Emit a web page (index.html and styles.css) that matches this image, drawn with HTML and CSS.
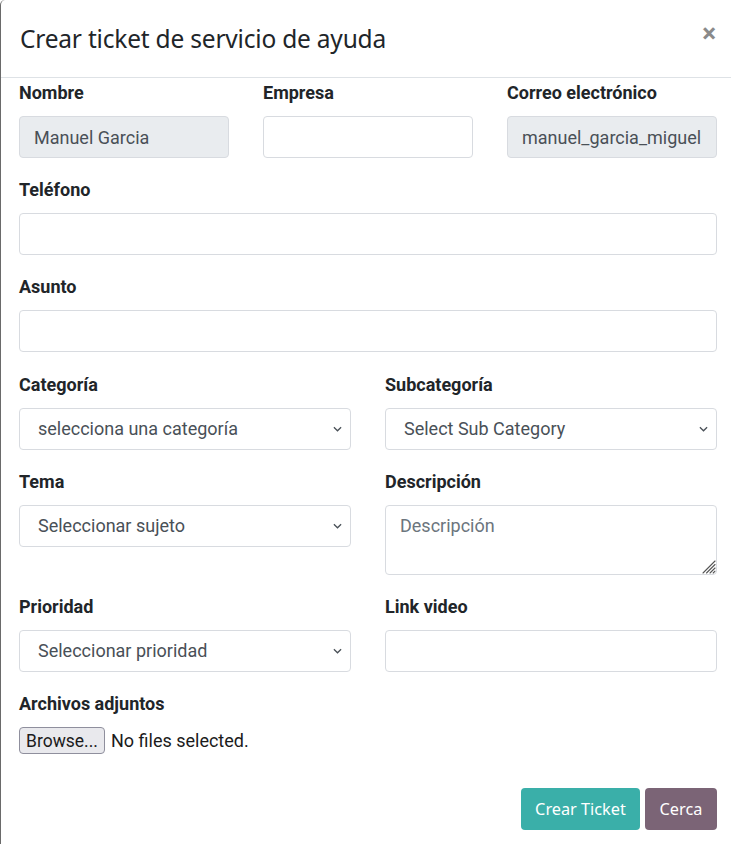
FILE: index.html
```html
<!DOCTYPE html>
<html lang="es">
<head>
<meta charset="utf-8">
<title>Crear ticket</title>
<link rel="stylesheet" href="styles.css">
</head>
<body>
<div class="modal">
  <header class="modal-header">
    <h4 class="modal-title">Crear ticket de servicio de ayuda</h4>
    <button class="close" type="button">×</button>
  </header>
  <div class="modal-body">
    <div class="row cols-3">
      <div class="group">
        <label class="lbl">Nombre</label>
        <input class="ctrl readonly" type="text" value="Manuel Garcia" readonly>
      </div>
      <div class="group">
        <label class="lbl">Empresa</label>
        <input class="ctrl" type="text">
      </div>
      <div class="group">
        <label class="lbl">Correo electrónico</label>
        <input class="ctrl readonly" type="text" value="manuel_garcia_miguel" readonly>
      </div>
    </div>
    <div class="group">
      <label class="lbl">Teléfono</label>
      <input class="ctrl" type="text">
    </div>
    <div class="group">
      <label class="lbl">Asunto</label>
      <input class="ctrl" type="text">
    </div>
    <div class="row cols-2">
      <div class="group">
        <label class="lbl">Categoría</label>
        <select class="ctrl sel"><option>selecciona una categoría</option></select>
      </div>
      <div class="group">
        <label class="lbl">Subcategoría</label>
        <select class="ctrl sel"><option>Select Sub Category</option></select>
      </div>
    </div>
    <div class="row cols-2">
      <div class="group">
        <label class="lbl">Tema</label>
        <select class="ctrl sel"><option>Seleccionar sujeto</option></select>
      </div>
      <div class="group">
        <label class="lbl">Descripción</label>
        <textarea class="ctrl area" placeholder="Descripción"></textarea>
      </div>
    </div>
    <div class="row cols-2">
      <div class="group">
        <label class="lbl">Prioridad</label>
        <select class="ctrl sel"><option>Seleccionar prioridad</option></select>
      </div>
      <div class="group">
        <label class="lbl">Link video</label>
        <input class="ctrl" type="text">
      </div>
    </div>
    <div class="group file-group">
      <label class="lbl">Archivos adjuntos</label>
      <div class="file">
        <span class="file-btn">Browse...</span>
        <span class="file-text">No files selected.</span>
      </div>
    </div>
  </div>
  <footer class="modal-footer">
    <button class="btn btn-primary" type="button">Crear Ticket</button>
    <button class="btn btn-secondary" type="button">Cerca</button>
  </footer>
</div>
</body>
</html>
```
FILE: styles.css
```css
html, body {
  margin: 0;
  padding: 0;
  background: #ffffff;
}
body {
  font-family: Roboto, "Liberation Sans", sans-serif;
  color: #212529;
  height: 844px;
  overflow: hidden;
}
.modal {
  border-left: 1px solid #6a6a6a;
  border-top-left-radius: 5px;
  min-height: 844px;
  background: #fff;
}
.modal-header {
  height: 78px;
  box-sizing: border-box;
  border-bottom: 1px solid #dee2e6;
  display: flex;
  align-items: center;
  justify-content: space-between;
  padding: 0 14px 0 19px;
}
.modal-title {
  margin: 0;
  font-family: "Noto Sans", sans-serif;
  font-weight: 400;
  font-size: 24.5px;
  color: #212529;
  letter-spacing: -0.2px;
}
.close {
  border: 0;
  background: none;
  padding: 0;
  font-family: Roboto, sans-serif;
  font-weight: 700;
  font-size: 26px;
  line-height: 1;
  color: #8a8a8a;
  margin-top: -12px;
  margin-right: 1px;
}
.modal-body {
  padding: 1px 14px 0 18px;
}
.row {
  display: grid;
  column-gap: 34px;
}
.cols-3 { grid-template-columns: 1fr 1fr 1fr; }
.cols-2 { grid-template-columns: 1fr 1fr; }
.group {
  display: flex;
  flex-direction: column;
  margin-bottom: 18.2px;
}
.lbl {
  font-weight: 700;
  font-size: 18px;
  line-height: 27px;
  margin-bottom: 10px;
  color: #212529;
}
.ctrl {
  box-sizing: border-box;
  height: 42px;
  width: 100%;
  border: 1px solid #d8dbe0;
  border-radius: 4px;
  background: #fff;
  font-family: Roboto, sans-serif;
  font-size: 18px;
  color: #495057;
  padding: 0 14px;
  margin: 0;
  outline: none;
}
.readonly {
  background: #e9ecef;
}
.sel {
  appearance: none;
  -webkit-appearance: none;
  padding-left: 18px;
  background-image: url("data:image/svg+xml,%3Csvg xmlns='http://www.w3.org/2000/svg' width='10' height='6' viewBox='0 0 10 6'%3E%3Cpath d='M1 1l4 4 4-4' fill='none' stroke='%23495057' stroke-width='1.4'/%3E%3C/svg%3E");
  background-repeat: no-repeat;
  background-position: right 8px center;
  background-size: 9px 6px;
}
.area {
  height: 70px;
  padding: 8px 14px;
  resize: vertical;
  line-height: 24px;
}
.area::placeholder {
  color: #6c757d;
}
.area::-webkit-resizer {
  background-color: transparent;
  background-image: url("data:image/svg+xml,%3Csvg xmlns='http://www.w3.org/2000/svg' width='15' height='15' viewBox='0 0 15 15'%3E%3Cg stroke='%23555' stroke-width='1.1' stroke-linecap='round'%3E%3Cpath d='M14 2L2 14'/%3E%3Cpath d='M14 5.5L5.5 14'/%3E%3Cpath d='M14 9L9 14'/%3E%3Cpath d='M14 12.2L12.2 14'/%3E%3C/g%3E%3C/svg%3E");
  background-repeat: no-repeat;
  background-position: right bottom;
}
.file-group {
  margin-bottom: 0;
}
.file {
  display: flex;
  align-items: center;
  gap: 6px;
  font-family: Roboto, sans-serif;
  font-size: 18px;
  color: #1b1b1b;
}
.file-btn {
  display: inline-flex;
  align-items: center;
  box-sizing: border-box;
  height: 27px;
  padding: 0 6px;
  background: #e9e9ed;
  border: 1px solid #8f8f9d;
  border-radius: 4px;
  font-size: 17.5px;
}
.modal-footer {
  display: flex;
  justify-content: flex-end;
  gap: 5px;
  padding: 34px 14px 0 18px;
}
.btn {
  height: 42px;
  border: 0;
  border-radius: 4px;
  color: #fff;
  font-family: "Noto Sans", sans-serif;
  font-size: 16.3px;
  padding: 0 10px;
}
.btn-primary {
  background: #3aafa9;
  width: 119px;
}
.btn-secondary {
  background: #7b6476;
  width: 72px;
}
```
